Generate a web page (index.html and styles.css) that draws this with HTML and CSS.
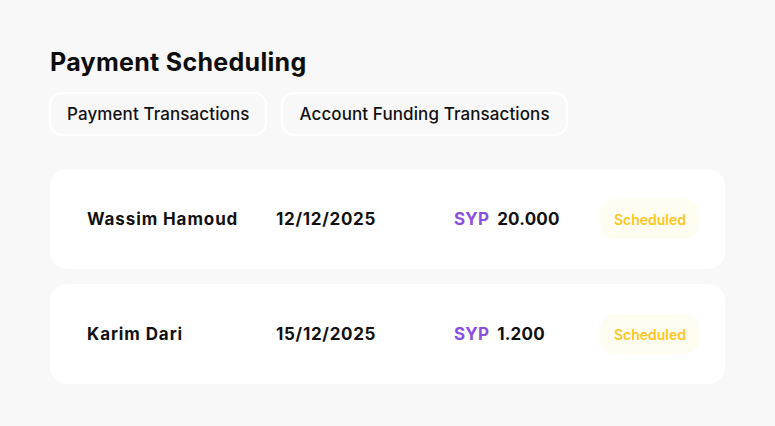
FILE: index.html
```html
<!DOCTYPE html>
<html>
<head>
<meta charset="utf-8">
<link rel="stylesheet" href="styles.css">
</head>
<body>
<main class="page">
  <h1 class="title">Payment Scheduling</h1>
  <div class="tabs">
    <button class="tab">Payment Transactions</button>
    <button class="tab">Account Funding Transactions</button>
  </div>
  <div class="list">
    <div class="card">
      <span class="name">Wassim Hamoud</span>
      <span class="date">12/12/2025</span>
      <span class="amount"><span class="cur">SYP</span><span class="val">20.000</span></span>
      <span class="badge">Scheduled</span>
    </div>
    <div class="card">
      <span class="name">Karim Dari</span>
      <span class="date">15/12/2025</span>
      <span class="amount"><span class="cur">SYP</span><span class="val">1.200</span></span>
      <span class="badge">Scheduled</span>
    </div>
  </div>
</main>
</body>
</html>
```
FILE: styles.css
```css
html, body {
  margin: 0;
  padding: 0;
  background: #f8f8f8;
}
body {
  font-family: "Inter", sans-serif;
  color: #111;
}
.page {
  padding: 46px 50px 0 50px;
  width: 675px;
}
.title {
  margin: 0;
  font-family: "Inter", sans-serif;
  font-weight: 700;
  font-size: 25px;
  line-height: 32px;
  letter-spacing: 0.3px;
  color: #0d0d0d;
}
.tabs {
  display: flex;
  gap: 14px;
  margin-top: 14px;
  margin-left: -1px;
}
.tab {
  height: 44px;
  padding: 0 16px;
  border: 2px solid #ffffff;
  border-radius: 13px;
  background: #f8f8f8;
  font-family: "Inter", sans-serif;
  font-weight: 500;
  font-size: 17px;
  letter-spacing: 0.1px;
  color: #111;
}
.list {
  display: flex;
  flex-direction: column;
  gap: 15px;
  margin-top: 33px;
}
.card {
  height: 100px;
  background: #fff;
  border-radius: 17px;
  display: flex;
  align-items: center;
  padding: 0 25px 0 37px;
  font-size: 17px;
  font-weight: 700;
}
.name {
  width: 189px;
  letter-spacing: 0.9px;
}
.date {
  width: 178px;
  letter-spacing: 0.7px;
}
.amount {
  width: 146px;
  display: flex;
  gap: 8px;
  letter-spacing: 0.2px;
}
.cur {
  color: #8a4fe0;
}
.badge {
  width: 100px;
  height: 40px;
  border-radius: 16px;
  background: #fffcf2;
  color: #fbc61e;
  font-family: "Inter", sans-serif;
  font-weight: 600;
  font-size: 14px;
  letter-spacing: 0;
  display: flex;
  align-items: center;
  justify-content: center;
}
```
